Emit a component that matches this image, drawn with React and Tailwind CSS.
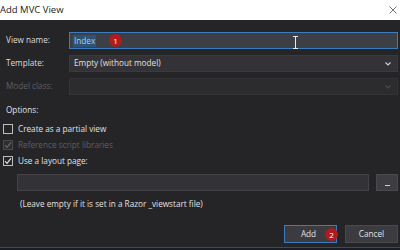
import React from "react";

function Check({ checked, disabled }) {
  return (
    <div
      className={`w-[10px] h-[10px] border flex items-center justify-center ${
        disabled ? "border-[#4a4a4e] bg-[#2d2d30]" : "border-[#bdbdbd] bg-transparent"
      }`}
    >
      {checked && (
        <svg width="8" height="8" viewBox="0 0 8 8">
          <path
            d="M1 4.2 L3 6.3 L7 1.3"
            fill="none"
            stroke={disabled ? "#6a6a6e" : "#e6e6e6"}
            strokeWidth="1.2"
          />
        </svg>
      )}
    </div>
  );
}

function Badge({ n }) {
  return (
    <div className="w-[13px] h-[13px] rounded-full bg-[#b01c1c] text-white text-[8px] leading-none flex items-center justify-center">
      {n}
    </div>
  );
}

export default function App() {
  return (
    <div
      className="w-[400px] h-[250px] bg-[#252527] overflow-hidden flex flex-col text-[8.2px] text-[#e0e0e0]"
      style={{ fontFamily: '"Open Sans", "Noto Sans", sans-serif' }}
    >
      <div className="h-[20px] bg-white flex items-center justify-between pr-[2px] shrink-0">
        <span className="text-[9.5px] text-[#222] leading-none">Add MVC View</span>
        <svg width="8" height="8" viewBox="0 0 8 8" className="mr-[1px]">
          <path d="M0.5 0.5 L7.5 7.5 M7.5 0.5 L0.5 7.5" stroke="#777" strokeWidth="1" />
        </svg>
      </div>

      <div className="flex-1 flex flex-col pr-[2px]">
        <div className="flex items-center mt-[12px] h-[17px]">
          <div className="w-[69px] pl-[6px] text-[#dcdcdc]">View name:</div>
          <div className="relative flex-1 h-[17px] border border-[#3b7cbf] bg-[#3d3f46] flex items-center pl-[3px]">
            <span className="bg-[#2f5377] text-[#a8ccf0] leading-[12px] px-[1px]">Index</span>
            <div className="absolute left-[39px] top-[1px]">
              <Badge n="1" />
            </div>
            <svg
              className="absolute left-[222px] top-[3px]"
              width="7"
              height="13"
              viewBox="0 0 7 13"
            >
              <path d="M1 0.5 H6 M3.5 0.5 V12.5 M1 12.5 H6" stroke="#e8e8e8" strokeWidth="1" fill="none" />
            </svg>
          </div>
        </div>

        <div className="flex items-center mt-[6px] h-[17px]">
          <div className="w-[69px] pl-[6px] text-[#dcdcdc]">Template:</div>
          <div className="flex-1 h-[17px] border border-[#3a3a3e] bg-[#333337] flex items-center justify-between pl-[4px] pr-[6px]">
            <span>Empty (without model)</span>
            <svg width="6" height="4" viewBox="0 0 6 4">
              <path d="M0.5 0.5 L3 3 L5.5 0.5" stroke="#d0d0d0" strokeWidth="1.1" fill="none" />
            </svg>
          </div>
        </div>

        <div className="flex items-center mt-[6px] h-[17px]">
          <div className="w-[69px] pl-[6px] text-[#5e5e62]">Model class:</div>
          <div className="flex-1 h-[17px] border border-[#333336] bg-[#2c2c2f] flex items-center justify-end pr-[6px]">
            <svg width="6" height="4" viewBox="0 0 6 4">
              <path d="M0.5 0.5 L3 3 L5.5 0.5" stroke="#4a4a4e" strokeWidth="1.1" fill="none" />
            </svg>
          </div>
        </div>

        <div className="pl-[6px] mt-[8px] h-[14px] flex items-center">Options:</div>

        <div className="flex flex-col mt-[4px] pl-[3px]">
          <div className="flex items-center h-[16px] gap-[5px]">
            <Check />
            <span>Create as a partial view</span>
          </div>
          <div className="flex items-center h-[16px] gap-[5px]">
            <Check checked disabled />
            <span className="text-[#5e5e62]">Reference script libraries</span>
          </div>
          <div className="flex items-center h-[16px] gap-[5px]">
            <Check checked />
            <span>Use a layout page:</span>
          </div>
        </div>

        <div className="flex items-center mt-[5px] pl-[17px] h-[17px] gap-[7px]">
          <div className="flex-1 h-[17px] border border-[#444448] bg-[#333337]" />
          <div className="w-[22px] h-[17px] border border-[#4a4a4e] bg-[#3e3e42] flex items-end justify-center pb-[4px]">
            <div className="w-[5px] h-[1px] bg-[#cfcfcf]" />
          </div>
        </div>

        <div className="pl-[20px] mt-[6px] h-[14px] flex items-center">
          (Leave empty if it is set in a Razor _viewstart file)
        </div>

        <div className="flex justify-end gap-[8px] mt-[14px]">
          <div className="relative w-[53px] h-[18px] border border-[#3b7cbf] bg-[#3b3b40] flex items-center justify-center">
            <span className="mr-[4px]">Add</span>
            <div className="absolute left-[40px] top-[2px]">
              <Badge n="2" />
            </div>
          </div>
          <div className="w-[53px] h-[18px] border border-[#4a4a4e] bg-[#3b3b40] flex items-center justify-center">
            Cancel
          </div>
        </div>
      </div>

      <div className="h-[1px] bg-[#3d4a5c] shrink-0" />
      <div className="h-[2px] bg-[#181d28] shrink-0" />
    </div>
  );
}
